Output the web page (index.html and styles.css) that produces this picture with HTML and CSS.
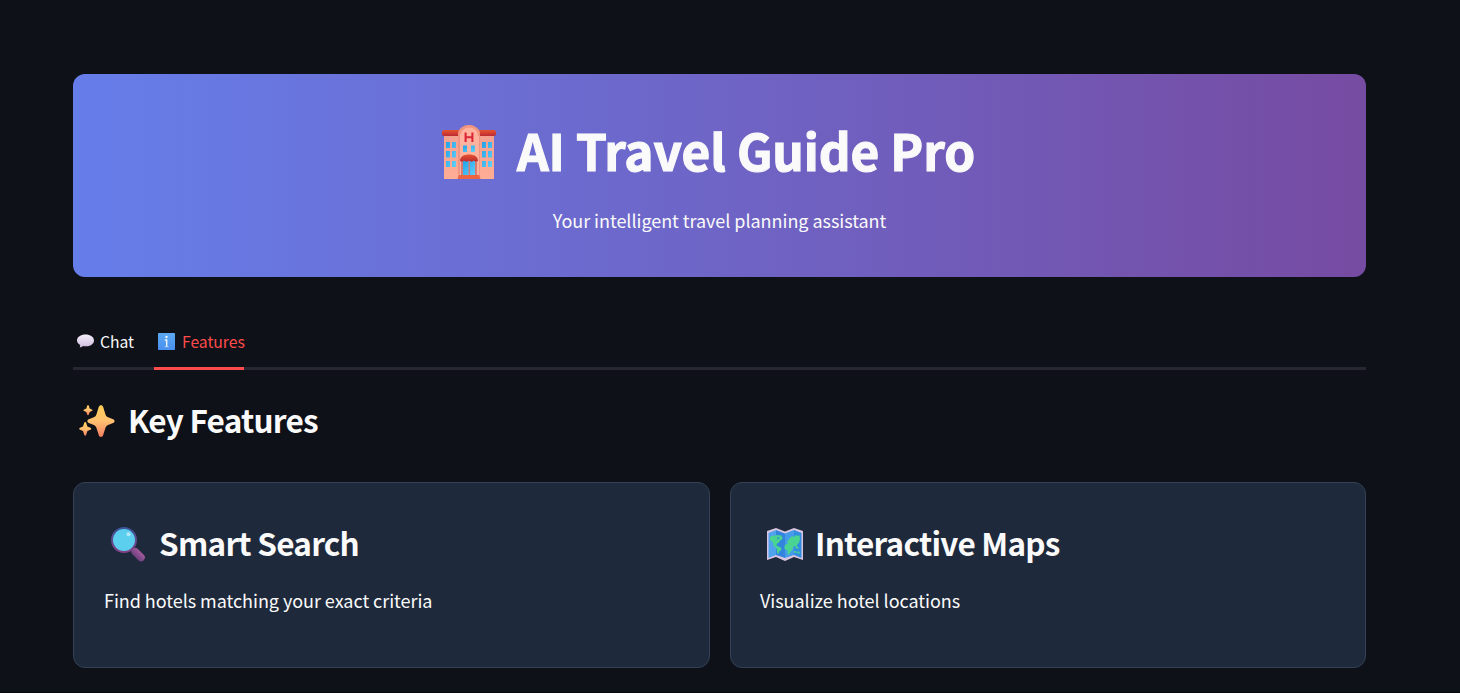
FILE: index.html
```html
<!DOCTYPE html>
<html lang="en">
<head>
<meta charset="utf-8">
<title>AI Travel Guide Pro</title>
<link rel="stylesheet" href="styles.css">
</head>
<body>
<main class="page">
  <header class="hero">
    <h1 class="hero-title">
      <svg class="icon-hotel" viewBox="0 0 54 54" aria-hidden="true">
        <defs>
          <linearGradient id="wall" x1="0" y1="0" x2="0" y2="1"><stop offset="0" stop-color="#f2a090"/><stop offset="1" stop-color="#ffad94"/></linearGradient>
          <linearGradient id="roof" x1="0" y1="0" x2="0" y2="1"><stop offset="0" stop-color="#e8542f"/><stop offset="1" stop-color="#bb2a32"/></linearGradient>
          <linearGradient id="glass" x1="0" y1="0" x2="1" y2="1"><stop offset="0" stop-color="#22a2e8"/><stop offset="1" stop-color="#62d0fa"/></linearGradient>
        </defs>
        <path d="M2 9h50v45H2z" fill="url(#wall)"/>
        <rect y="5" width="54" height="6" rx="2" fill="url(#roof)"/>
        <path d="M16 54V10a11 10 0 0 1 22 0v44z" fill="#ee9585"/>
        <path d="M18 54V11a9.500 9 0 0 1 19 0v43z" fill="#ffb29d"/>
        <path d="M16 11V9.500a11 9.500 0 0 1 22 0V11h-2v-1a9 7.500 0 0 0-18 0v1z" fill="#f0957f"/>
        <path d="M23.600 7.500v9.500M30.400 7.500v9.500M24 12.200h6" stroke="#dc2638" stroke-width="2.100" fill="none"/>
        <g fill="url(#glass)">
          <path d="M4 17h4v6H4zM10 17h4v6h-4zM4 26h4v6.500H4zM10 26h4v6.500h-4zM4 36h4v6H4zM10 36h4v6h-4z"/>
          <path d="M40 17h4v6h-4zM46 17h4v6h-4zM40 26h4v6.500h-4zM46 26h4v6.500h-4zM40 36h4v6h-4zM46 36h4v6h-4z"/>
          <path d="M21 20.500h4V27h-4zM29 20.500h4V27h-4z"/>
        </g>
        <path d="M19 35h16v16H19z" fill="#d77a71"/>
        <path d="M21 36h5.500v15H21zM28 36h5v15h-5z" fill="url(#glass)"/>
        <path d="M18 36c0-4.500 4-6.500 9-6.500s9 2 9 6.500l-2 .7-2-1-2.500 1-2.500-1-2.500 1-2.500-1-2 1z" fill="url(#roof)"/>
        <path d="M17 50h20l1.500 4h-23z" fill="#ed6541"/>
      </svg>
      <span class="hero-name">AI Travel Guide Pro</span>
    </h1>
    <p class="hero-sub">Your intelligent travel planning assistant</p>
  </header>

  <nav class="tabs">
    <a class="tab">
      <svg class="icon-chat" viewBox="0 0 17 17" aria-hidden="true">
        <defs><linearGradient id="bubble" x1="0" y1="0" x2="0" y2="1"><stop offset="0" stop-color="#f4effa"/><stop offset="1" stop-color="#cfbddc"/></linearGradient></defs>
        <path d="M8.500 1.500C13.200 1.500 17 4 17 7.500s-3.600 5.800-8.300 5.800c-1 0-2-.1-2.800-.3-.8 1-2.100 1.500-3.400 1.300.5-.6.800-1.600.6-2.400C1.200 10.900 0 9.400 0 7.500c0-3.500 3.800-6 8.500-6z" fill="url(#bubble)"/>
      </svg>
      <span>Chat</span>
    </a>
    <a class="tab tab-active">
      <svg class="icon-info" viewBox="0 0 17 17" aria-hidden="true">
        <defs><linearGradient id="tile" x1="0" y1="0" x2="0" y2="1"><stop offset="0" stop-color="#5ba9f3"/><stop offset="1" stop-color="#498ff0"/></linearGradient></defs>
        <rect width="17" height="17" rx=".8" fill="url(#tile)"/>
        <circle cx="8.500" cy="4" r="1.150" fill="#fff"/>
        <path d="M6.800 7h1.900v6.500" stroke="#eef5ff" stroke-width="1.400" fill="none"/>
        <path d="M6.700 13.700h3.800" stroke="#b9d8fb" stroke-width="1"/>
      </svg>
      <span>Features</span>
    </a>
  </nav>

  <h3 class="heading section-title">
    <svg class="icon-spark" viewBox="0 0 36 34" aria-hidden="true">
      <defs><linearGradient id="gold" x1="0" y1="0" x2="0" y2="1"><stop offset="0" stop-color="#ffce56"/><stop offset=".5" stop-color="#ffc070"/><stop offset="1" stop-color="#f47d62"/></linearGradient></defs>
      <g fill="url(#gold)">
        <path d="M19.800 1.800c.7-2.200 3.600-2.200 4.300 0l2.300 7.500c.5 1.500 1.300 2.500 2.700 3l5 2c1.900.8 1.900 3 0 3.800l-5 2c-1.400.6-2.200 1.600-2.700 3l-2.300 7.200c-.7 2.200-3.600 2.200-4.300 0l-2.300-7.200c-.5-1.400-1.300-2.400-2.700-3l-5-2c-1.900-.8-1.900-3 0-3.800l5-2c1.400-.5 2.200-1.500 2.700-3z"/>
        <path d="M8.200.8c.3-1 1.300-1 1.600 0l.9 2.700 2.200.9c.9.400.9 1.300 0 1.700l-2.200.9-.9 2.400c-.3 1-1.300 1-1.600 0L7.300 7l-2.200-.9c-.9-.4-.9-1.300 0-1.700l2.200-.9z"/>
        <path d="M5.200 17.800c.3-1.200 1.700-1.200 2 0l1.200 3.600 3 1.300c1.100.5 1.100 1.500 0 2l-3 1.300-1.200 3.800c-.3 1.200-1.700 1.200-2 0L4 26l-3-1.300c-1.100-.5-1.100-1.500 0-2l3-1.300z"/>
      </g>
    </svg>
    <span>Key Features</span>
  </h3>

  <section class="cards">
    <article class="card">
      <h3 class="heading">
        <svg class="icon-search" viewBox="0 0 36 36" aria-hidden="true">
          <defs>
            <linearGradient id="rim" x1="0" y1="0" x2="0" y2="1"><stop offset="0" stop-color="#3c549b"/><stop offset="1" stop-color="#824185"/></linearGradient>
            <linearGradient id="grip" x1="0" y1="1" x2="1" y2="0"><stop offset="0" stop-color="#69407c"/><stop offset="1" stop-color="#a55a9e"/></linearGradient>
          </defs>
          <path d="M21 22l4 3" stroke="#65758a" stroke-width="3"/>
          <path d="M25.200 24.800l5.800 5.700" stroke="url(#grip)" stroke-width="7.600" stroke-linecap="round"/>
          <circle cx="14" cy="13" r="12" fill="#5bcfed" stroke="url(#rim)" stroke-width="2"/>
          <circle cx="18.500" cy="7.300" r="2" fill="#b5e8fa"/>
        </svg>
        <span>Smart Search</span>
      </h3>
      <p class="card-text">Find hotels matching your exact criteria</p>
    </article>
    <article class="card card-maps">
      <h3 class="heading">
        <svg class="icon-map" viewBox="0 0 36 34" aria-hidden="true">
          <path d="M0 3l9-3 9 3.500L27 0l9 3v29l-9-3-9 4-9-4-9 3z" fill="#d8c5e2"/>
          <path d="M1.500 5L9 2v25l-7.500 3z" fill="#51a2ed"/><path d="M9 2l9 3.500V30l-9-3z" fill="#3284dd"/>
          <path d="M18 5.500L27 2v25l-9 3z" fill="#459bea"/><path d="M27 2l7.500 3v25L27 27z" fill="#318de0"/>
          <path d="M3 9l2-1.500 2 .5 3-1 4 .5 1.500 2-.5 2-2 1-1 2-2 1-.5 2 2 1 3 1.500-.5 2.500-2 1-.5 2.500-1.500-1v-3.500l-1.500-2-2-2-1-3.500L3 12zM17.500 18l1.500-2h2l-1-2 2-3 3-3 2 1 2-2 2 1 1.500-1 .5 4-1 4-1.500 1-.5 3-2-1-2 1-.5 3-2 2-2 3-1-1v-3.500l-3-1.500zM28.500 18.500l3 .5v1.800l-3-.6zM27 23l2.500.4V25L27 24.600zM30.500 23.300l2 .5V26l-2-.5z" fill="#49d591"/>
          <path d="M10.500 9.500l2-.5-.8 1.800-1.700.7z" fill="#3284dd"/>
        </svg>
        <span>Interactive Maps</span>
      </h3>
      <p class="card-text">Visualize hotel locations</p>
    </article>
  </section>
</main>
</body>
</html>
```
FILE: styles.css
```css
* { box-sizing: border-box; }
html { background: #0e1117; }
body {
  margin: 0;
  height: 693px;
  overflow: hidden;
  color: #fafafa;
  font-family: "Noto Sans CJK JP", "Noto Sans", sans-serif;
  font-size: 18px;
  letter-spacing: -0.045px;
  border-bottom: 1px solid #05070a;
}
h1, h3, p { margin: 0; }
svg { display: block; flex: none; }
.page { width: 1293px; margin-left: 73px; padding-top: 74px; }

.hero {
  height: 203px;
  padding-top: 38px;
  border-radius: 12px;
  background: linear-gradient(90deg, #667eea 0%, #764ba2 100%);
}
.hero-title {
  display: flex;
  justify-content: center;
  height: 76px;
  padding-right: 22px;
  font-size: 49.500px;
  font-weight: 700;
  letter-spacing: -0.08px;
  line-height: 76px;
  white-space: nowrap;
}
.hero-name { -webkit-text-stroke: 1.200px #fafafa; }
.icon-hotel { width: 54px; height: 54px; margin: 13px 21px 0 0; }
.hero-sub { margin-top: 17px; text-align: center; line-height: 30px; }

.tabs {
  display: flex;
  gap: 20px;
  height: 50px;
  margin-top: 43px;
  padding-bottom: 3px;
  background: linear-gradient(#262730, #262730) bottom / 100% 3px no-repeat;
}
.tab {
  position: relative;
  display: flex;
  height: 47px;
  padding-left: 4px;
  font-size: 15.750px;
  line-height: 44px;
}
.tab-active { color: #ff4b4b; width: 90px; }
.tab-active::after {
  content: "";
  position: absolute;
  left: 0;
  top: 47px;
  width: 100%;
  height: 3px;
  background: #ff4b4b;
}
.icon-chat, .icon-info { width: 17px; height: 17px; margin: 13px 6px 0 0; }
.icon-info { margin-right: 7px; }
.tab:first-child { width: 61px; }

.heading {
  display: flex;
  height: 42px;
  padding-left: 6px;
  font-size: 31.500px;
  font-weight: 600;
  letter-spacing: -0.75px;
  line-height: 42px;
  white-space: nowrap;
}
.section-title { margin-top: 28px; }
.icon-spark { width: 36px; height: 34px; margin: 7px 13px 0 0; }

.cards { display: grid; grid-template-columns: 637px 636px; gap: 20px; margin-top: 42px; }
.card {
  height: 186px;
  padding: 38px 30px 0;
  border: 1px solid #334155;
  border-radius: 12px;
  background: #1e293b;
}
.card-maps { padding-left: 29px; }
.icon-search { width: 36px; height: 36px; margin: 6px 13px 0 0; }
.icon-map { width: 36px; height: 34px; margin: 7px 13px 0 0; }
.card-maps .heading { padding-left: 7px; }
.card-maps .icon-map { margin-right: 12px; }
.card-text { margin-top: 22px; line-height: 30px; }
```
